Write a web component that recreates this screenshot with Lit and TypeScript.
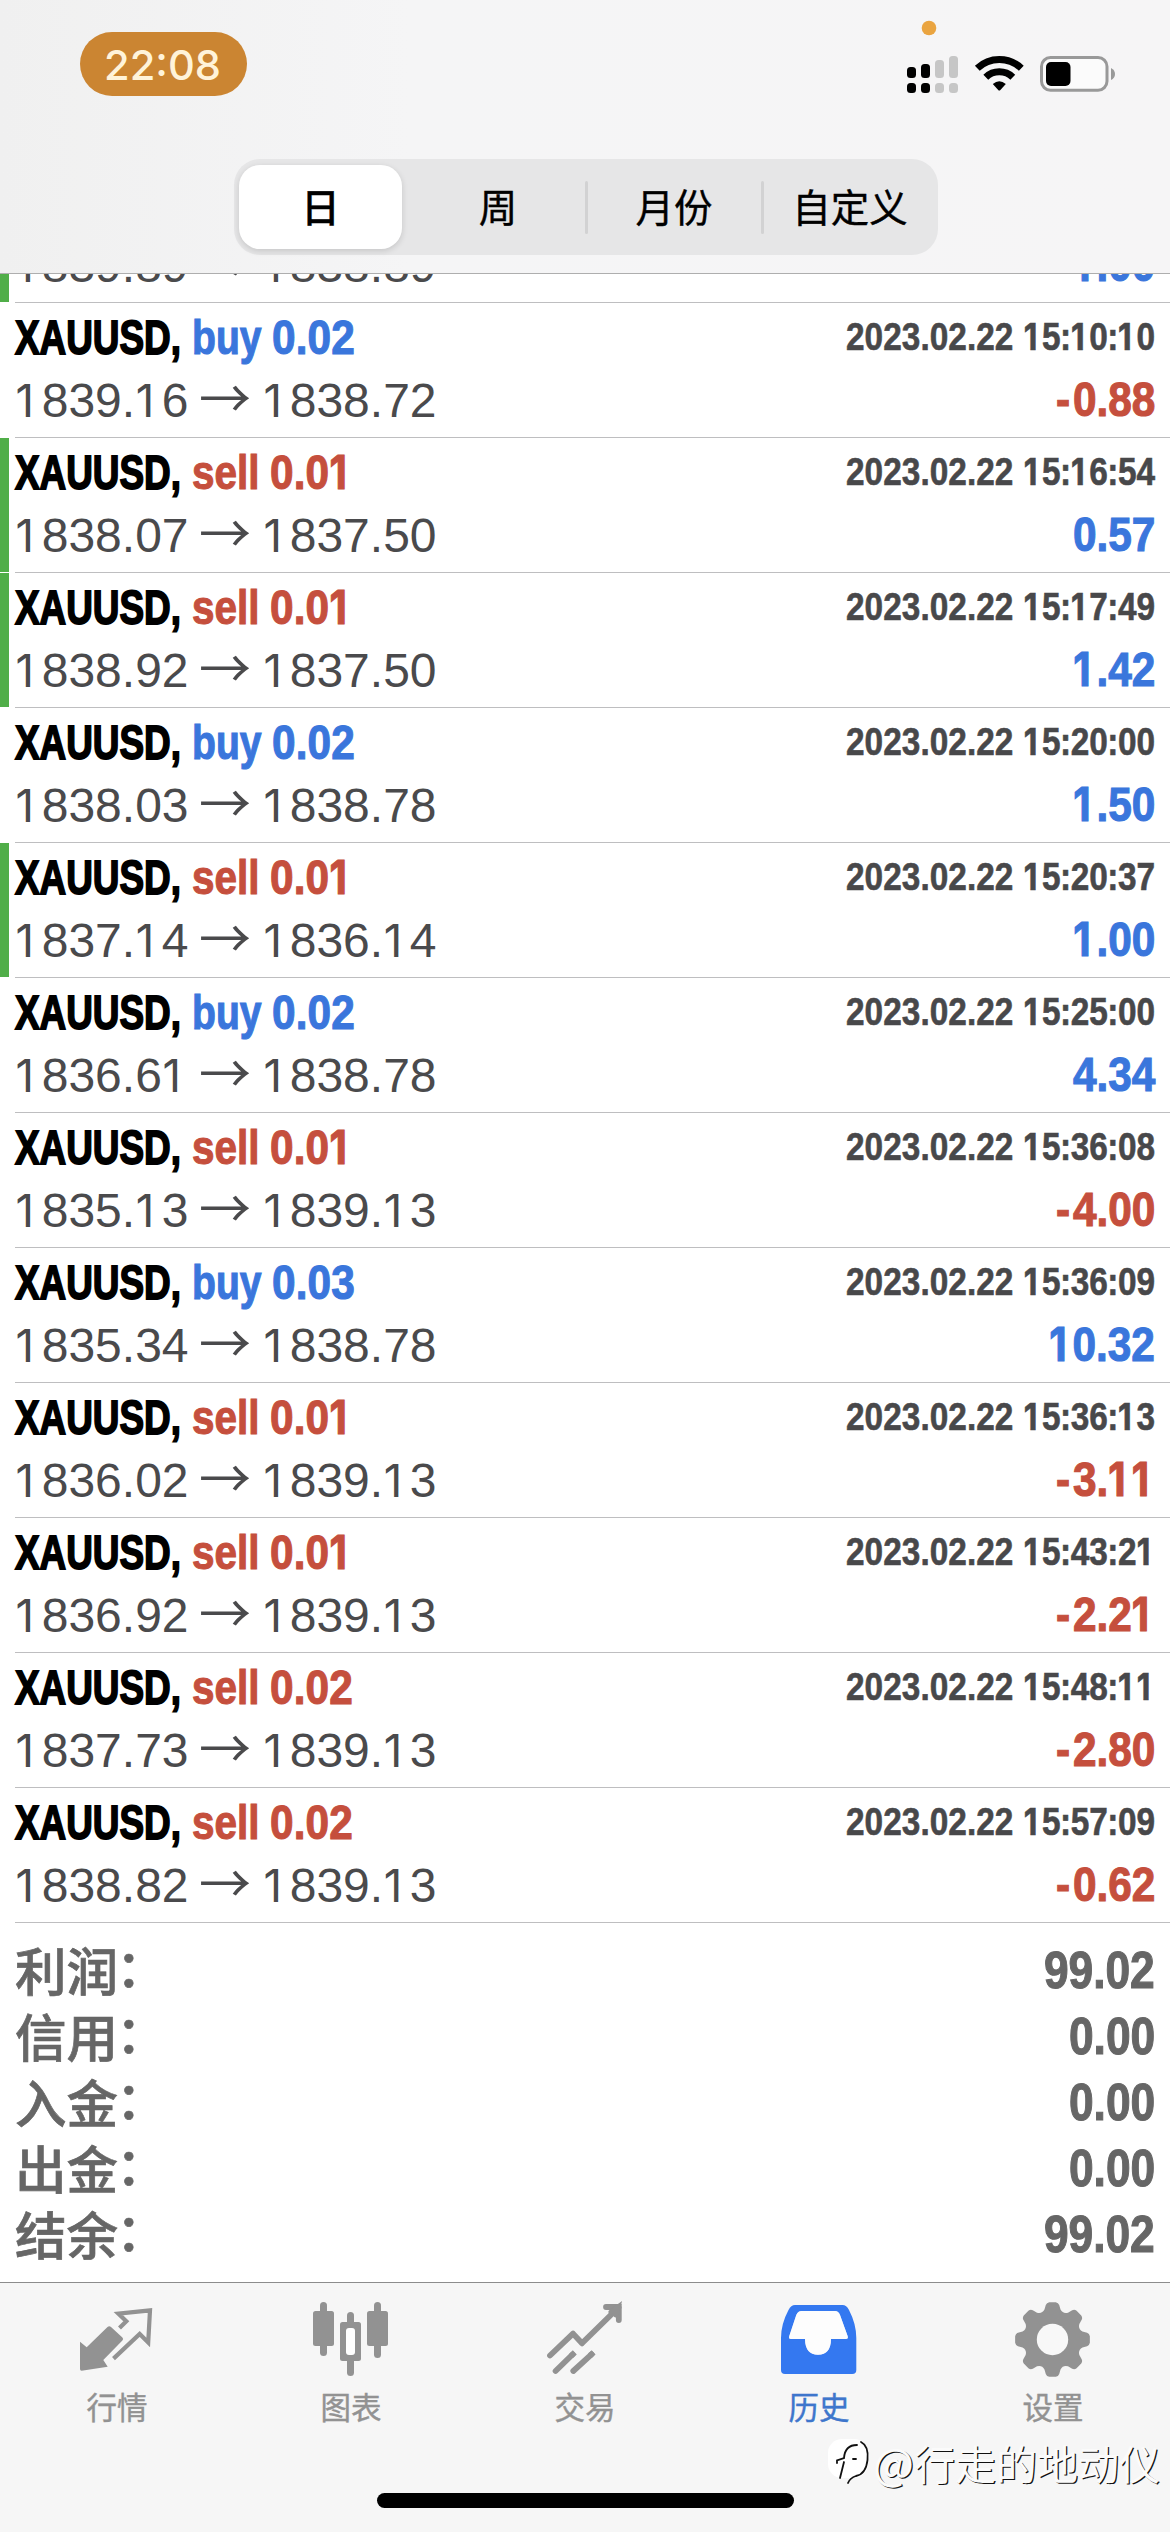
import { LitElement, html, svg, css } from "lit";
import { customElement } from "lit/decorators.js";

interface Deal {
  side: "buy" | "sell";
  lots: string;
  time: string;
  open: string;
  close: string;
  profit: string;
  mark?: boolean;
}

const D = "2023.02.22 ";
const deals: Deal[] = [
  { side: "buy", lots: "0.02", time: D + "15:10:10", open: "1839.16", close: "1838.72", profit: "-0.88" },
  { side: "sell", lots: "0.01", time: D + "15:16:54", open: "1838.07", close: "1837.50", profit: "0.57", mark: true },
  { side: "sell", lots: "0.01", time: D + "15:17:49", open: "1838.92", close: "1837.50", profit: "1.42", mark: true },
  { side: "buy", lots: "0.02", time: D + "15:20:00", open: "1838.03", close: "1838.78", profit: "1.50" },
  { side: "sell", lots: "0.01", time: D + "15:20:37", open: "1837.14", close: "1836.14", profit: "1.00", mark: true },
  { side: "buy", lots: "0.02", time: D + "15:25:00", open: "1836.61", close: "1838.78", profit: "4.34" },
  { side: "sell", lots: "0.01", time: D + "15:36:08", open: "1835.13", close: "1839.13", profit: "-4.00" },
  { side: "buy", lots: "0.03", time: D + "15:36:09", open: "1835.34", close: "1838.78", profit: "10.32" },
  { side: "sell", lots: "0.01", time: D + "15:36:13", open: "1836.02", close: "1839.13", profit: "-3.11" },
  { side: "sell", lots: "0.01", time: D + "15:43:21", open: "1836.92", close: "1839.13", profit: "-2.21" },
  { side: "sell", lots: "0.02", time: D + "15:48:11", open: "1837.73", close: "1839.13", profit: "-2.80" },
  { side: "sell", lots: "0.02", time: D + "15:57:09", open: "1838.82", close: "1839.13", profit: "-0.62" },
];

const totals: [string, string][] = [
  ["利润", "99.02"],
  ["信用", "0.00"],
  ["入金", "0.00"],
  ["出金", "0.00"],
  ["结余", "99.02"],
];

/** Text condensed to an exact advance width. */
const fit = (text: string, width: number, height: number, base: number, cls: string) => html`
  <svg class="fit ${cls}" width=${width} height=${height}>
    <text x="0" y=${base} textLength=${width} lengthAdjust="spacingAndGlyphs">${text}</text>
  </svg>`;

/** Advances relative to one digit. */
const ADVANCE: Record<string, number> = { ".": 0.5, "-": 0.72, ":": 0.54, " ": 0.54 };

/**
 * A number set on a fixed digit pitch, squeezed horizontally by `squeeze`.
 * The digit 1 takes its footless form from another family, shifted by `nudge`.
 */
const num = (
  text: string, pitch: number, squeeze: number, nudge: number,
  height: number, base: number, cls: string,
) => {
  let x = 0;
  const glyphs = [...text].map((c) => {
    const at = (x + (c === "1" ? nudge : c === ":" ? -pitch * 0.03 : 0)) / squeeze;
    x += pitch * (ADVANCE[c] ?? 1);
    return svg`<tspan class=${c === "1" ? "one" : "any"} x=${at.toFixed(2)}>${c}</tspan>`;
  });
  return html`
    <svg class="fit ${cls}" width=${x} height=${height}>
      <text y=${base} transform="scale(${squeeze} 1)">${glyphs}</text>
    </svg>`;
};

function gearPath(cx: number, cy: number): string {
  const pts: string[] = [];
  const at = (deg: number, r: number) => {
    const a = (deg * Math.PI) / 180;
    return `${(cx + r * Math.cos(a)).toFixed(2)} ${(cy + r * Math.sin(a)).toFixed(2)}`;
  };
  for (let i = 0; i < 8; i++) {
    const c = i * 45 - 90;
    pts.push(`${i ? "L" : "M"}${at(c - 15, 31)}`);
    pts.push(`L${at(c - 11, 35.2)} Q${at(c - 9, 37.4)} ${at(c - 5, 37.5)}`);
    pts.push(`L${at(c + 5, 37.5)} Q${at(c + 9, 37.4)} ${at(c + 11, 35.2)}`);
    pts.push(`L${at(c + 15, 31)} Q${at(c + 22.5, 27.5)} ${at(c + 30, 31)}`);
  }
  return pts.join(" ") + "Z";
}

const icons = {
  quotes: svg`
    <path d="M42.5 32 L49.3 25.3 L41.3 17.6 L73 14.3 L71.2 46.5 L62.7 38 L36.5 62.6" fill="none" stroke="currentColor" stroke-width="4.2"/>
    <path d="M30.5 31 Q32.3 29.3 34 31 L45.4 41.6 Q46.8 43 45.4 44.6 L26.3 64 L30.7 70.7 L4.6 74.8 Q3 74.8 3 73 L3 45.7 L9.7 51.3Z" fill="currentColor"/>`,
  charts: svg`
    <g fill="currentColor">
      <rect x="9" y="6" width="7" height="54" rx="3.5"/><rect x="2" y="15" width="21" height="35" rx="2.5"/>
      <rect x="36" y="16" width="7" height="64" rx="3.5"/><rect x="29" y="26" width="21" height="39" rx="2.5"/>
      <rect x="63" y="6" width="7" height="56" rx="3.5"/><rect x="56" y="15" width="21" height="35" rx="2.5"/>
    </g>
    <rect x="35" y="32" width="9" height="27" rx="3" fill="#fff"/>`,
  trade: svg`
    <g fill="none" stroke="currentColor" stroke-width="5.8" stroke-linecap="round">
      <path d="M5 59.5 L28 37.6 L37 47.3 L73.5 11.5" stroke-linejoin="round"/>
      <path d="M61 11 H73.8 V24"/>
      <path d="M66 16 L73 11 L71 19" stroke-width="5"/>
      <path d="M10.6 75 L27.5 58.5 M28.3 75 L46.5 58.3"/>
      <path d="M26 60 L29.8 56.4 M45 59.7 L48.6 56.4" stroke-linecap="butt"/>
    </g>`,
  history: svg`
    <path fill="currentColor" fill-rule="evenodd" d="M16 9 H63.5 Q67.5 9 70 14 Q77.3 28 77.3 42 V74 Q77.3 78 73.3 78 H6 Q2 78 2 74 V42 Q2 28 9.5 14 Q12 9 16 9Z
      M22.5 15 Q19 15 17.3 19 L10.3 40 Q9.3 43 12 43 H26 Q26.3 58.7 39 58.7 Q51.8 58.7 52 43 H66.8 Q69.6 43 68.6 40 L61 19 Q59.5 15 56 15Z"/>
    <path fill="#fff" opacity=".75" d="M22.5 15 Q19 15 17.3 19 L10.3 40 Q9.3 43 12 43 H26 Q26.3 58.7 39 58.7 Q51.8 58.7 52 43 H66.8 Q69.6 43 68.6 40 L61 19 Q59.5 15 56 15Z"/>`,
  settings: svg`
    <path d=${gearPath(39.5, 43.5)} fill="currentColor"/>
    <circle cx="39.5" cy="43.5" r="15.7" fill="#f8f8f8"/>`,
};

const tabs: [keyof typeof icons, string][] = [
  ["quotes", "行情"],
  ["charts", "图表"],
  ["trade", "交易"],
  ["history", "历史"],
  ["settings", "设置"],
];

@customElement("app-root")
export class AppRoot extends LitElement {
  static styles = css`
    :host {
      display: block;
      font-family: "Liberation Sans", "Noto Sans CJK SC", sans-serif;
    }
    .screen {
      position: relative;
      display: flex;
      flex-direction: column;
      width: 1170px;
      height: 2532px;
      overflow: hidden;
      background: #fff;
    }
    .header {
      box-sizing: border-box;
      height: 274px;
      flex: none;
      display: flex;
      flex-direction: column;
      border-bottom: 1px solid #aeaeae;
      background: linear-gradient(90deg, #f0f0f0, #f5f5f6 35%, #f6f5f6);
    }
    .status {
      display: flex;
      justify-content: space-between;
      height: 159px;
      padding: 0 50px 0 80px;
    }
    .clock {
      box-sizing: border-box;
      width: 167px;
      height: 64px;
      margin-top: 32px;
      padding-left: 24px;
      border-radius: 32px;
      background: #cb8532;
    }
    .segments {
      display: flex;
      align-self: flex-start;
      margin-left: 234px;
      width: 704px;
      height: 96px;
      border-radius: 26px;
      background: #e6e6e7;
    }
    .segment {
      box-sizing: border-box;
      flex: 1;
      display: flex;
      align-items: center;
      justify-content: center;
      padding-bottom: 4px;
      font: 400 38.5px/60px "Noto Sans CJK SC", sans-serif;
      color: #000;
      -webkit-text-stroke: 0.4px currentColor;
    }
    .segment.split::before {
      content: "";
      width: 3px;
      height: 53px;
      margin: 4px auto 0 -1px;
      border-radius: 2px;
      background: #d2d2d3;
    }
    .segment.split::after {
      content: "";
      width: 2px;
      margin-left: auto;
    }
    .segment.on {
      flex: none;
      width: 163px;
      height: 84px;
      margin: 6px 8px 6px 5px;
      border-radius: 21px;
      background: #fff;
      box-shadow: 0 2px 6px rgba(0, 0, 0, 0.14);
      font-weight: 500;
    }
    .fit {
      display: block;
      flex: none;
      overflow: visible;
    }
    .fit text {
      fill: currentColor;
      white-space: pre;
    }
    .one {
      font-family: Inter, sans-serif;
      font-size: 95%;
    }
    .time {
      font: 500 41.5px Inter, sans-serif;
      color: #fff3d9;
    }
    .bold {
      font: bold 48.7px "Liberation Sans", sans-serif;
      stroke: currentColor;
      stroke-width: 1.1px;
    }
    .symbol {
      color: #000;
      stroke-width: 1.8px;
    }
    .date {
      font-size: 39.5px;
      color: #48484a;
      stroke-width: 0.6px;
    }
    .price {
      font: 400 48px "Liberation Sans", sans-serif;
      color: #4a4a4c;
    }
    .arrow {
      font: 52px "Noto Sans CJK SC", sans-serif;
      color: #4a4a4c;
    }
    .total {
      font-size: 52px;
      color: #666;
    }
    .blue {
      color: #3a76dc;
    }
    .red {
      color: #c54f3d;
    }
    .clip {
      display: flex;
      flex-direction: column;
      justify-content: flex-end;
      flex: none;
      height: 29px;
      overflow: hidden;
    }
    .deal {
      flex: none;
      display: flex;
      height: 135px;
    }
    .mark {
      width: 9px;
      height: 134px;
      margin-right: 6px;
    }
    .mark.on {
      background: #50ae48;
    }
    .body {
      box-sizing: border-box;
      flex: 1;
      border-bottom: 1px solid #bebec0;
    }
    .line {
      display: flex;
      height: 62px;
      padding-right: 15px;
    }
    .line.second {
      height: 72px;
    }
    .gap {
      width: 10.5px;
    }
    .before {
      width: 10.5px;
    }
    .after {
      width: 12.2px;
    }
    .push {
      flex: 1;
    }
    .totals {
      flex: 1;
      padding: 13px 15px 0;
    }
    .sum {
      display: flex;
      justify-content: space-between;
      height: 66px;
    }
    .label {
      font: 500 51.5px/66px "Noto Sans CJK SC", sans-serif;
      color: #666;
      -webkit-text-stroke: 0.7px currentColor;
    }
    .colon {
      margin-left: -2px;
      line-height: 50px;
      vertical-align: 4.5px;
    }
    .tabbar {
      box-sizing: border-box;
      flex: none;
      display: flex;
      flex-direction: column;
      height: 250px;
      border-top: 1px solid #8c8c8c;
      background: #f6f6f6;
    }
    .tabs {
      display: flex;
      height: 210px;
    }
    .tab {
      flex: 1;
      display: flex;
      flex-direction: column;
      align-items: center;
      padding-top: 13px;
      color: #929292;
    }
    .tab.on {
      color: #3478f0;
    }
    .caption {
      margin-top: 6px;
      font: 400 30.5px/40px "Noto Sans CJK SC", sans-serif;
      -webkit-text-stroke: 0.4px currentColor;
    }
    .tab.on .caption {
      color: #3e76cc;
    }
    .home {
      align-self: center;
      width: 417px;
      height: 15px;
      border-radius: 8px;
      background: #000;
    }
    .watermark {
      position: absolute;
      right: 10px;
      bottom: 46px;
      display: flex;
      align-items: center;
      gap: 3px;
    }
    .author {
      font: 400 41px/48px "Noto Sans CJK SC", sans-serif;
      color: #fbfbfb;
      text-shadow: 1.2px 1.2px 0 #111;
      white-space: nowrap;
    }
    .sign {
      font-size: 43px;
    }
  `;

  private priceLine(open: string, close: string, profit: string) {
    return html`<div class="line second">
      ${num(open, 26.7, 1, 0.6, 72, 51.5, "price")}
      <span class="before"></span>
      ${fit("→", 52, 72, 53, "arrow")}
      <span class="after"></span>
      ${num(close, 26.7, 1, 0.6, 72, 51.5, "price")}
      <span class="push"></span>
      ${num(profit, 23.5, 0.87, 0.2, 72, 51.5, "bold " + (profit.startsWith("-") ? "red" : "blue"))}
    </div>`;
  }

  private deal(d: Deal) {
    const tone = d.side === "buy" ? "blue" : "red";
    return html`<div class="deal">
      <div class="mark ${d.mark ? "on" : ""}"></div>
      <div class="body">
        <div class="line">
          ${fit("XAUUSD,", 166, 62, 50.7, "bold symbol")}
          <span class="gap"></span>
          ${fit(d.side, d.side === "buy" ? 69.5 : 67.5, 62, 50.7, "bold " + tone)}
          <span class="gap"></span>
          ${num(d.lots, 23.7, 0.87, 0.2, 62, 50.7, "bold " + tone)}
          <span class="push"></span>
          ${num(d.time, 18.6, 0.845, 0.2, 62, 47, "bold date")}
        </div>
        ${this.priceLine(d.open, d.close, d.profit)}
      </div>
    </div>`;
  }

  private statusIcons() {
    const bars = [67, 64, 60, 56];
    return html`<svg width="220" height="110" viewBox="900 0 220 110">
      <circle cx="929" cy="28" r="7.3" fill="#eaa440"/>
      ${bars.map((y, i) => svg`
        <g fill=${i < 2 ? "#000" : "#c6c6c6"}>
          <rect x=${907 + i * 14} y=${y} width="9" height=${78 - y} rx="3.5"/>
          <rect x=${907 + i * 14} y="83" width="9" height="10" rx="3.5"/>
        </g>`)}
      <g fill="none" stroke="#000" stroke-width="7">
        <path d="M977.3 68.2 A32 32 0 0 1 1021.3 68.2"/>
        <path d="M985.8 77.2 A19.5 19.5 0 0 1 1012.8 77.2"/>
      </g>
      <path d="M992.8 84 Q999.3 78.4 1005.8 84 L1000.4 90 Q999.3 91.2 998.2 90Z"/>
      <rect x="1041.5" y="57.5" width="65.5" height="32.8" rx="9" fill="#fbfbfb" stroke="#999" stroke-width="3"/>
      <rect x="1046" y="62" width="24.5" height="24" rx="5"/>
      <path d="M1111 68 Q1115 70 1115 74 Q1115 78 1111 80Z" fill="#999"/>
    </svg>`;
  }

  render() {
    return html`<div class="screen">
      <div class="header">
        <div class="status">
          <div class="clock">${fit("22:08", 117, 64, 47.5, "time")}</div>
          ${this.statusIcons()}
        </div>
        <div class="segments">
          <div class="segment on">日</div>
          <div class="segment">周</div>
          <div class="segment split">月份</div>
          <div class="segment split">自定义</div>
        </div>
      </div>
      <div class="clip">
        <div class="deal">
          <div class="mark on"></div>
          <div class="body">
            <div class="line"></div>
            ${this.priceLine("1839.89", "1838.89", "1.00")}
          </div>
        </div>
      </div>
      ${deals.map((d) => this.deal(d))}
      <div class="totals">
        ${totals.map(([label, value]) => html`<div class="sum">
          <span class="label">${label}<span class="colon">：</span></span>
          ${num(value, 24.6, 0.853, 0.2, 66, 52.5, "bold total")}
        </div>`)}
      </div>
      <div class="tabbar">
        <div class="tabs">
          ${tabs.map(([key, label]) => html`<div class="tab ${key === "history" ? "on" : ""}">
            <svg width="80" height="84" viewBox="0 0 80 84">${icons[key]}</svg>
            <span class="caption">${label}</span>
          </div>`)}
        </div>
        <div class="home"></div>
      </div>
      <div class="watermark">
        <svg width="42" height="50" viewBox="0 0 42 50">
          <rect x="0" y="3" width="40" height="39" rx="14" fill="#fff"/>
          <g fill="none" stroke="#111" stroke-width="1.8" stroke-linecap="round">
            <path d="M9 27 V24.5 L16 22 Q17 9 29 9"/>
            <path d="M16 26 L12 42"/>
            <path d="M33 6 Q41 10 39.5 24 Q38 38 28 40 Q22 42 20 47"/>
            <path d="M25 23 H28"/>
          </g>
        </svg>
        <span class="author"><span class="sign">@</span>行走的地动仪</span>
      </div>
    </div>`;
  }
}
